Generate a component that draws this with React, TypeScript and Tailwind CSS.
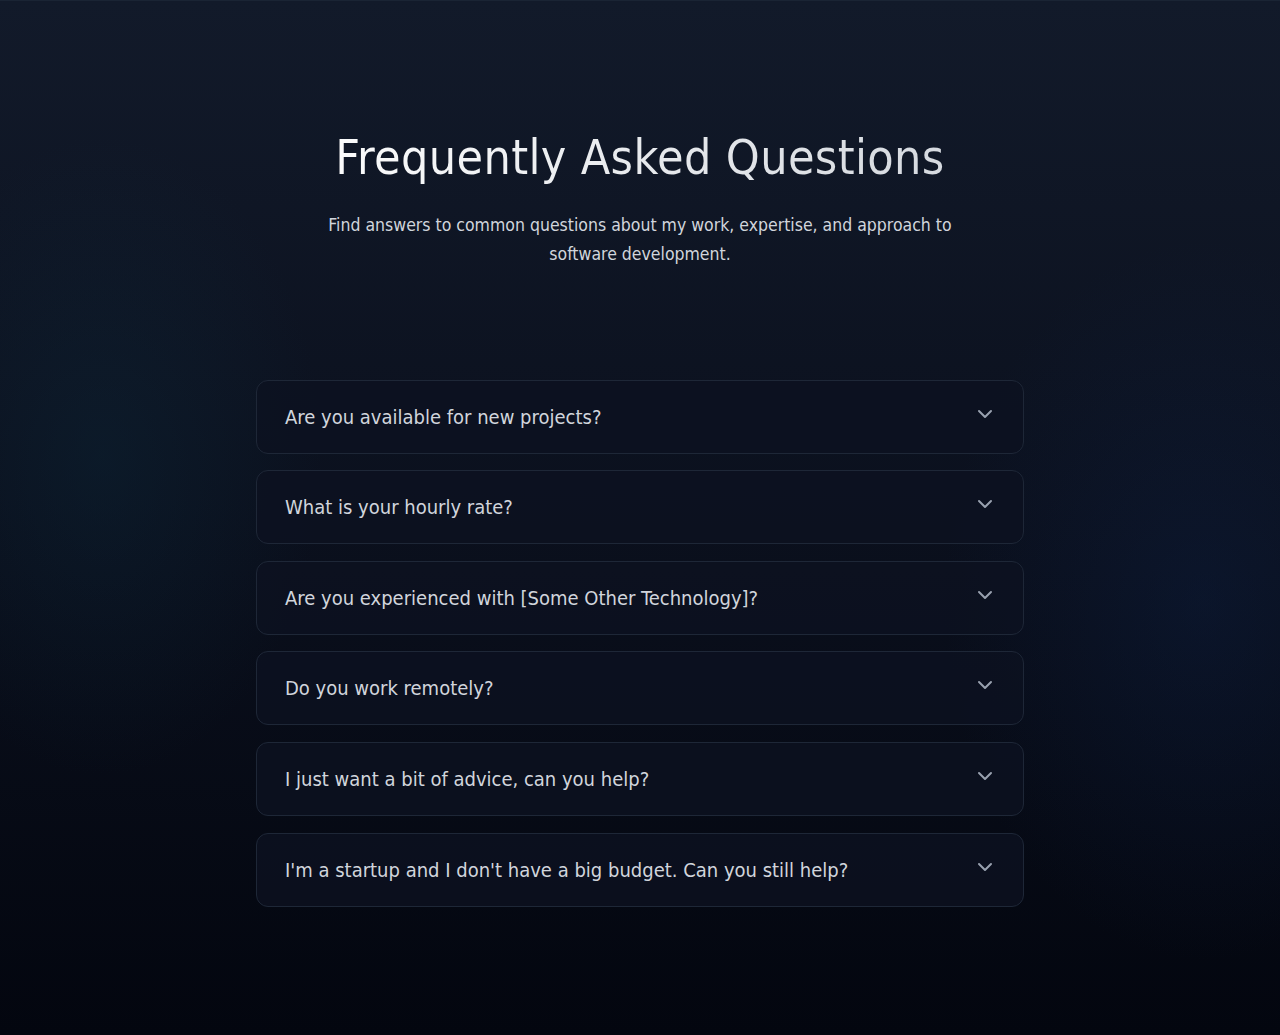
import { ChevronDown } from "lucide-react";

const faqs = [
    "Are you available for new projects?",
    "What is your hourly rate?",
    "Are you experienced with [Some Other Technology]?",
    "Do you work remotely?",
    "I just want a bit of advice, can you help?",
    "I'm a startup and I don't have a big budget. Can you still help?",
];

export default function App() {
    return (
        <section
            className="min-h-screen border-y border-[#1a2434] py-32 px-6 font-['DejaVu_Sans_Condensed','DejaVu_Sans',sans-serif] bg-[radial-gradient(ellipse_220px_320px_at_8%_44%,rgba(12,42,60,0.35),transparent),radial-gradient(ellipse_260px_360px_at_94%_58%,rgba(14,34,72,0.35),transparent),linear-gradient(to_bottom,#121a2a,#0a0f1c_55%,#03060f)]"
        >
            <div className="mx-auto max-w-3xl">
                {/* Header */}
                <div className="text-center mb-[111px]">
                    <h1 className="text-5xl leading-[1.2] tracking-[0.35px] font-normal bg-gradient-to-r from-white to-gray-300 bg-clip-text text-transparent">
                        Frequently Asked Questions
                    </h1>
                    <p className="mt-6 mx-auto max-w-2xl text-[17.5px] leading-[29px] text-gray-300">
                        Find answers to common questions about my work, expertise, and approach to software development.
                    </p>
                </div>

                {/* Accordion */}
                <div className="space-y-[16.6px]">
                    {faqs.map((q) => (
                        <div key={q} className="rounded-xl border border-[#1e2737] bg-[#0c1220]/80">
                            <button className="w-full flex items-start justify-between gap-4 pl-7 pr-[26px] py-[22px] text-left">
                                <span className="text-xl leading-7 text-gray-300">{q}</span>
                                <ChevronDown className="w-6 h-6 shrink-0 text-gray-400 -mt-px" strokeWidth={2} />
                            </button>
                        </div>
                    ))}
                </div>
            </div>
        </section>
    );
}
